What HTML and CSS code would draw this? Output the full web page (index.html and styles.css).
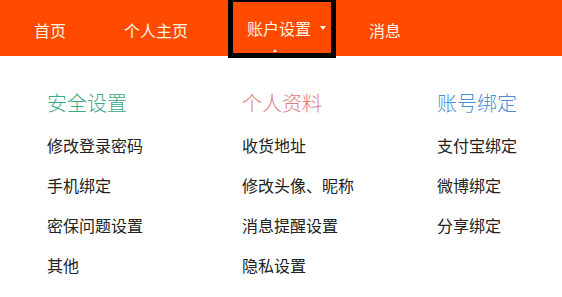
FILE: index.html
```html
<!DOCTYPE html>
<html lang="zh-CN">
<head>
    <meta charset="UTF-8">
    <title>账户设置</title>
    <link rel="stylesheet" href="styles.css">
</head>
<body>
    <nav>
        <ul>
            <li><a href="#">首页</a></li>
            <li><a href="#">个人主页</a></li>
            <li class="active"><a href="#">账户设置</a><span class="caret"></span><span class="pointer"></span></li>
            <li><a href="#">消息</a></li>
        </ul>
    </nav>
    <div class="dropdown">
        <div class="col">
            <h3 class="green">安全设置</h3>
            <a href="#">修改登录密码</a>
            <a href="#">手机绑定</a>
            <a href="#">密保问题设置</a>
            <a href="#">其他</a>
        </div>
        <div class="col">
            <h3 class="red">个人资料</h3>
            <a href="#">收货地址</a>
            <a href="#">修改头像、昵称</a>
            <a href="#">消息提醒设置</a>
            <a href="#">隐私设置</a>
        </div>
        <div class="col">
            <h3 class="blue">账号绑定</h3>
            <a href="#">支付宝绑定</a>
            <a href="#">微博绑定</a>
            <a href="#">分享绑定</a>
        </div>
    </div>
</body>
</html>
```

FILE: styles.css
```css
body {
  margin: 0;
  background: #fff;
  font-family: "Noto Sans CJK SC", "Noto Sans", sans-serif;
}

nav {
  background-color: #ff4a00;
  height: 56px;
}

nav ul {
  list-style: none;
  margin: 0;
  padding: 0 0 0 5px;
  display: flex;
  height: 100%;
}

nav li {
  display: flex;
  align-items: center;
  padding: 0 29px;
  padding-top: 3px;
}

nav a {
  color: #fff6e2;
  text-decoration: none;
  font-size: 16px;
}

nav li.active {
  position: relative;
  align-self: flex-start;
  box-sizing: border-box;
  height: 58px;
  margin: 0 4px 0 11px;
  padding: 1px 5px 0 14px;
  border: 5px solid #000;
  border-top-width: 2px;
}

.caret {
  margin-left: 9px;
  width: 0;
  height: 0;
  border-left: 3px solid transparent;
  border-right: 3px solid transparent;
  border-top: 4px solid #fff6e2;
}

.pointer {
  position: absolute;
  left: 40px;
  bottom: 1px;
  width: 0;
  height: 0;
  border-left: 2px solid transparent;
  border-right: 2px solid transparent;
  border-bottom: 3px solid #fff;
}

.dropdown {
  display: flex;
  padding: 32px 0 0 47px;
}

.col {
  flex: 0 0 195px;
  display: flex;
  flex-direction: column;
}

.col:last-child {
  flex-basis: auto;
}

.col h3 {
  margin: 0 0 7px;
  font-size: 20px;
  font-weight: 300;
  line-height: 30px;
}

.green { color: #3aa987; }
.red { color: #df7a7c; }
.blue { color: #4a8fd6; }

.col a {
  color: #222;
  text-decoration: none;
  font-size: 16px;
  line-height: 40px;
}
```
